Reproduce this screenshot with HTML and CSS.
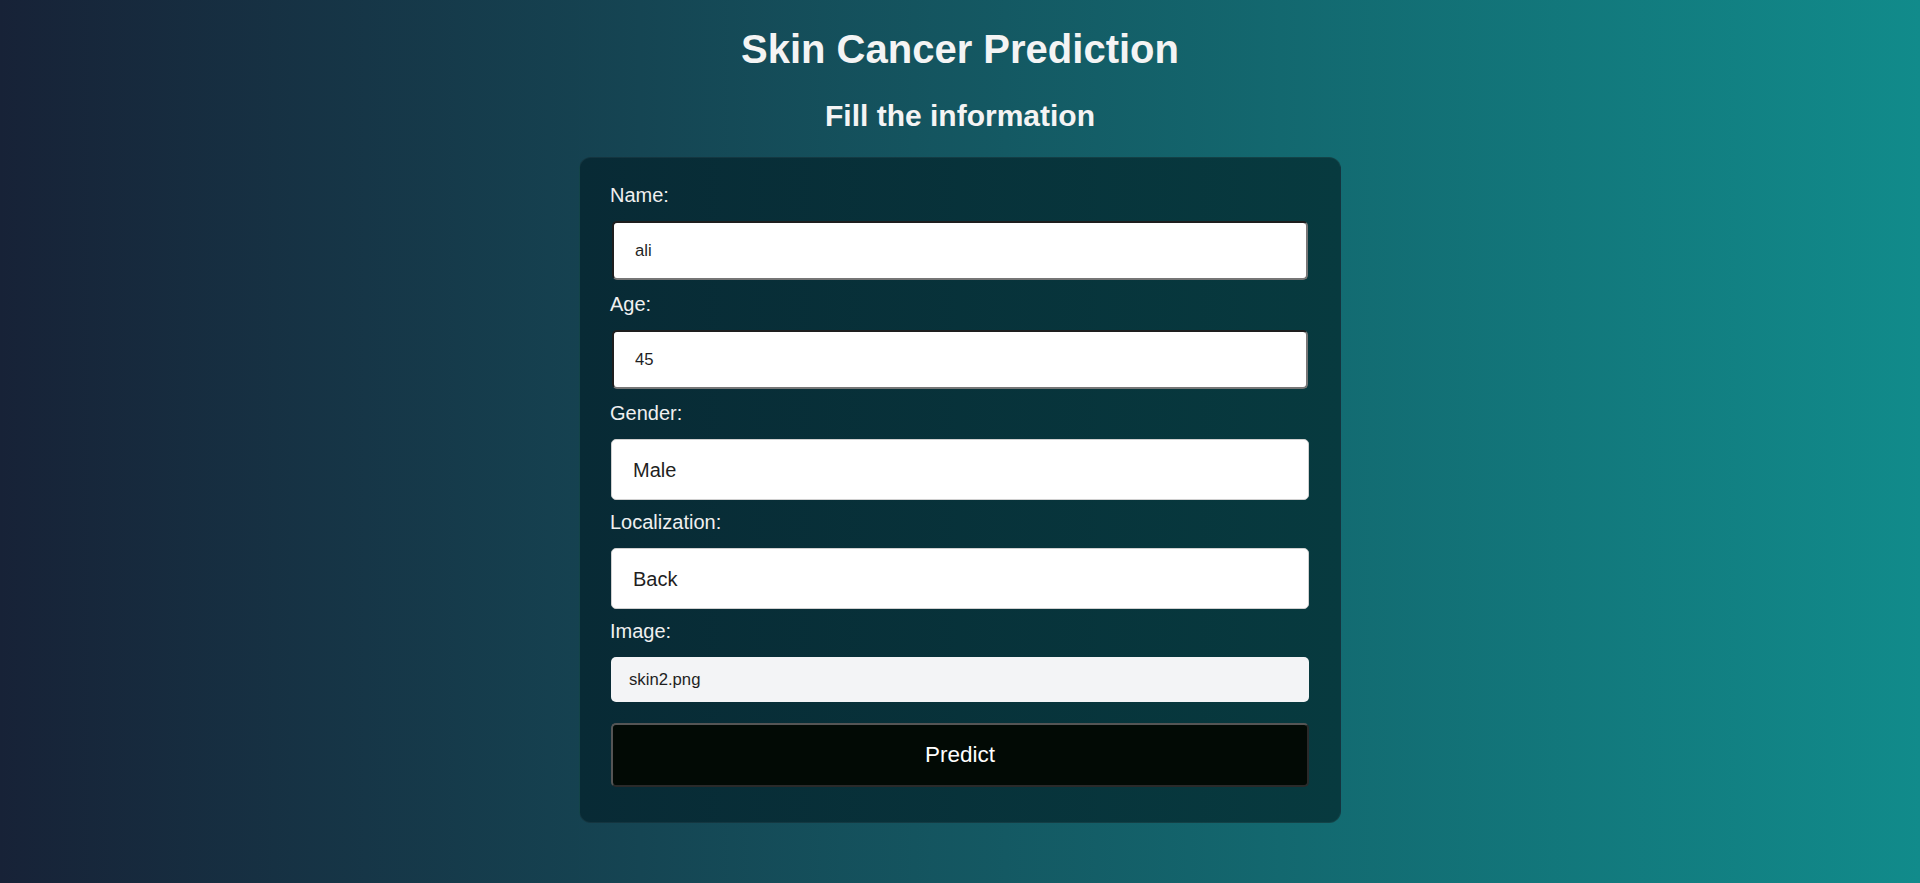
FILE: index.html
```html
<!DOCTYPE html>
<html lang="en">
<head>
<meta charset="utf-8">
<title>Skin Cancer Prediction</title>
<link rel="stylesheet" href="styles.css">
</head>
<body>
<main class="page">
  <h1 class="title">Skin Cancer Prediction</h1>
  <h2 class="subtitle">Fill the information</h2>
  <form class="card">
    <label class="label" for="name">Name:</label>
    <input class="text-input" id="name" type="text" value="ali">
    <label class="label" for="age">Age:</label>
    <input class="text-input" id="age" type="text" value="45">
    <label class="label" for="gender">Gender:</label>
    <select class="select" id="gender">
      <option>Male</option>
      <option>Female</option>
    </select>
    <label class="label" for="loc">Localization:</label>
    <select class="select" id="loc">
      <option>Back</option>
      <option>Face</option>
    </select>
    <label class="label">Image:</label>
    <div class="file-input">skin2.png</div>
    <button class="predict" type="button">Predict</button>
  </form>
</main>
</body>
</html>
```
FILE: styles.css
```css
html, body {
  margin: 0;
  padding: 0;
}
body {
  min-height: 100vh;
  background: linear-gradient(to right, #172237 0%, #118b8b 100%);
  font-family: "Liberation Sans", Arial, sans-serif;
  color: #f2f2f2;
}
.page {
  padding-top: 26px;
  display: flex;
  flex-direction: column;
  align-items: center;
}
.title {
  margin: 0 0 27px;
  font-size: 40px;
  line-height: 46px;
  font-weight: bold;
  color: #f4f4f4;
}
.subtitle {
  margin: 0 0 24px;
  font-size: 30px;
  line-height: 34px;
  font-weight: bold;
  color: #f4f4f4;
}
.card {
  box-sizing: border-box;
  width: 762px;
  padding: 26px 31px 35px;
  border-radius: 12px;
  border: 1px solid rgba(255, 255, 255, 0.05);
  background: linear-gradient(to right, #082a35 0%, #073a3f 100%);
  display: flex;
  flex-direction: column;
  align-items: stretch;
}
.label {
  display: block;
  font-size: 20px;
  line-height: 23px;
  margin: 0 0 14px -1px;
  color: #f0f0f0;
}
.text-input {
  box-sizing: border-box;
  height: 59px;
  margin: 0 1px 13px 1px;
  padding: 0 21px;
  border-style: solid;
  border-width: 2px;
  border-color: #1e1e1e #767676 #767676 #1e1e1e;
  border-radius: 5px;
  background: #ffffff;
  font-family: "Liberation Sans", Arial, sans-serif;
  font-size: 16.7px;
  color: #1f1f1f;
  outline: none;
}
.select {
  box-sizing: border-box;
  height: 61px;
  margin: 0 0 11px;
  padding: 0 21px;
  border: 1px solid #d0d0d0;
  border-radius: 5px;
  background: #ffffff;
  -webkit-appearance: none;
  appearance: none;
  font-family: "Liberation Sans", Arial, sans-serif;
  font-size: 20px;
  color: #1f1f1f;
  outline: none;
}
.file-input {
  box-sizing: border-box;
  height: 45px;
  margin: 0 0 21px;
  padding: 0 18px;
  display: flex;
  align-items: center;
  border-radius: 5px;
  background: #f3f4f6;
  font-size: 16.7px;
  color: #1f1f1f;
}
.predict {
  box-sizing: border-box;
  height: 64px;
  margin: 0;
  border-style: solid;
  border-width: 2px;
  border-color: #555555 #2a2a2a #2a2a2a #555555;
  border-radius: 5px;
  background: #020a05;
  color: #ffffff;
  font-family: "Liberation Sans", Arial, sans-serif;
  font-size: 22.5px;
  cursor: pointer;
}
```
